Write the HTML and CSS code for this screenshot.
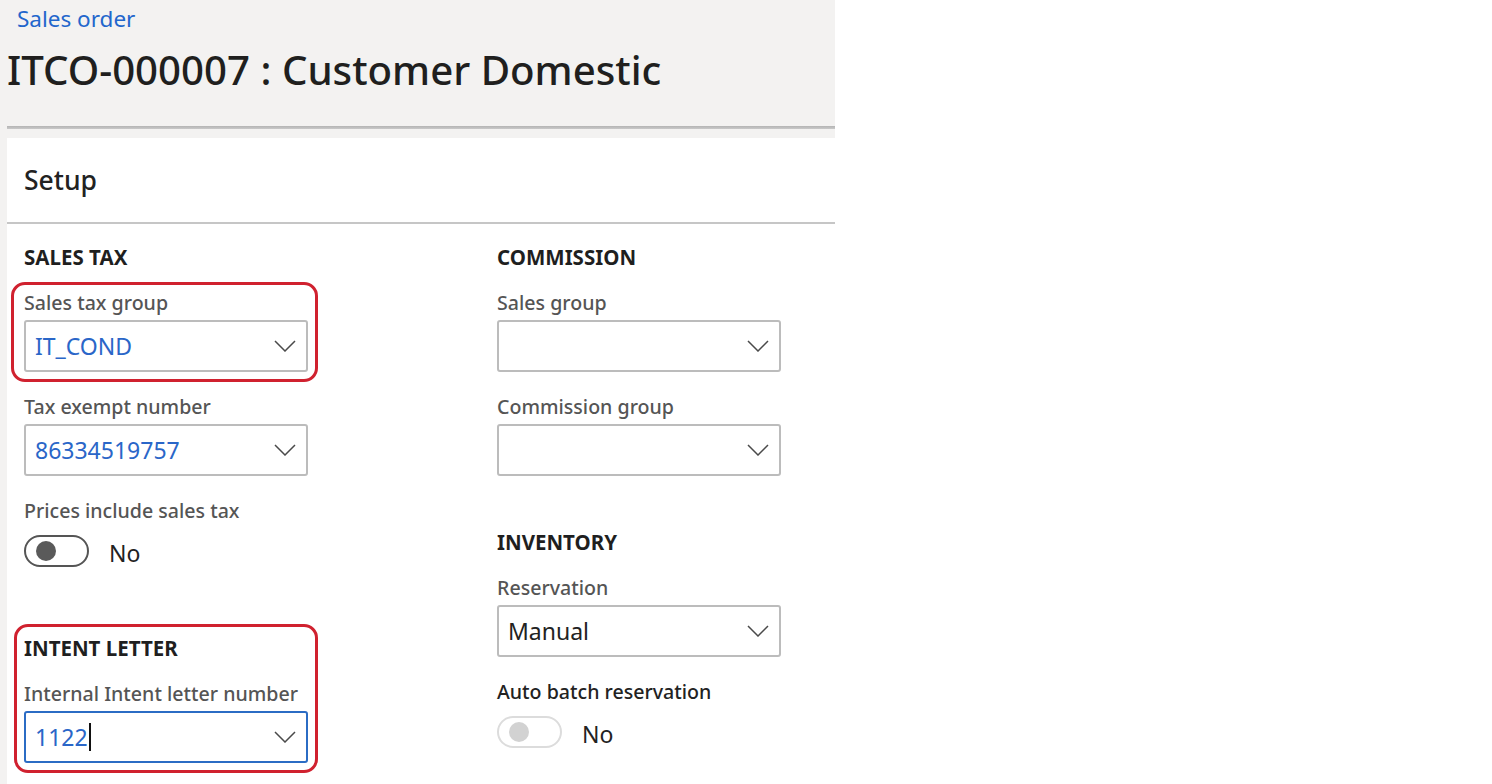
FILE: index.html
```html
<!DOCTYPE html>
<html lang="en">
<head>
<meta charset="utf-8">
<title>Sales order</title>
<link rel="stylesheet" href="styles.css">
</head>
<body>
<div class="page">
  <header class="header">
    <a class="crumb" href="#">Sales order</a>
    <h1 class="title">ITCO-000007 : Customer Domestic</h1>
  </header>
  <div class="header-rule"></div>
  <main class="panel">
    <div class="panel-head">
      <h2 class="panel-title">Setup</h2>
    </div>
    <div class="form">
      <div class="col">
        <h3 class="group-title">SALES TAX</h3>
        <div class="field highlight hl-1">
          <label class="label">Sales tax group</label>
          <div class="input"><span class="value link">IT_COND</span><svg class="chev" viewBox="0 0 22 12"><path d="M1 1 L11 11 L21 1"/></svg></div>
        </div>
        <div class="field">
          <label class="label">Tax exempt number</label>
          <div class="input"><span class="value link">86334519757</span><svg class="chev" viewBox="0 0 22 12"><path d="M1 1 L11 11 L21 1"/></svg></div>
        </div>
        <div class="field">
          <label class="label">Prices include sales tax</label>
          <div class="toggle-row"><span class="toggle"><span class="knob"></span></span><span class="toggle-text">No</span></div>
        </div>
        <div class="highlight hl-2">
          <h3 class="group-title">INTENT LETTER</h3>
          <div class="field">
            <label class="label">Internal Intent letter number</label>
            <div class="input focused"><span class="value link">1122</span><span class="caret"></span><svg class="chev" viewBox="0 0 22 12"><path d="M1 1 L11 11 L21 1"/></svg></div>
          </div>
        </div>
      </div>
      <div class="col">
        <h3 class="group-title">COMMISSION</h3>
        <div class="field">
          <label class="label">Sales group</label>
          <div class="input"><svg class="chev" viewBox="0 0 22 12"><path d="M1 1 L11 11 L21 1"/></svg></div>
        </div>
        <div class="field">
          <label class="label">Commission group</label>
          <div class="input"><svg class="chev" viewBox="0 0 22 12"><path d="M1 1 L11 11 L21 1"/></svg></div>
        </div>
        <h3 class="group-title inventory">INVENTORY</h3>
        <div class="field">
          <label class="label">Reservation</label>
          <div class="input"><span class="value">Manual</span><svg class="chev" viewBox="0 0 22 12"><path d="M1 1 L11 11 L21 1"/></svg></div>
        </div>
        <div class="field">
          <label class="label dark">Auto batch reservation</label>
          <div class="toggle-row"><span class="toggle disabled"><span class="knob"></span></span><span class="toggle-text">No</span></div>
        </div>
      </div>
    </div>
  </main>
</div>
</body>
</html>
```
FILE: styles.css
```css
* { box-sizing: border-box; }
html, body { margin: 0; padding: 0; background: #ffffff; }
body {
  font-family: "Noto Sans", "Open Sans", sans-serif;
  color: #222;
  height: 784px;
  overflow: hidden;
}
.page {
  width: 835px;
  height: 784px;
  background: #f3f2f1;
  display: flex;
  flex-direction: column;
}
.header {
  height: 126px;
  padding: 3px 0 0 0;
}
.crumb {
  display: block;
  margin-left: 17px;
  font-size: 22.5px;
  line-height: 32px;
  color: #2266cc;
  text-decoration: none;
}
.title {
  margin: 9px 0 0 7px;
  font-size: 40.2px;
  line-height: 52px;
  font-weight: 500;
  color: #201f1e;
}
.header-rule {
  margin-left: 7px;
  height: 3px;
  background: linear-gradient(#b4b4b4, #c9c9c9);
}
.panel {
  margin: 9px 0 0 7px;
  flex: 1;
  background: #ffffff;
  display: flex;
  flex-direction: column;
}
.panel-head {
  height: 86px;
  border-bottom: 2px solid #c6c6c6;
  display: flex;
  align-items: center;
  padding-left: 17px;
}
.panel-title {
  margin: 0;
  font-size: 26.5px;
  font-weight: 500;
  color: #222;
}
.form {
  display: grid;
  grid-template-columns: 473px 284px;
  padding: 20px 0 0 17px;
}
.col {
  display: flex;
  flex-direction: column;
  width: 284px;
}
.group-title {
  margin: 0;
  font-size: 20.5px;
  line-height: 26px;
  font-weight: 700;
  color: #1f1f1f;
}
.group-title.inventory { margin-top: 53px; }
.field {
  display: flex;
  flex-direction: column;
  margin-top: 20px;
}
.field + .field { margin-top: 22px; }
.label {
  font-size: 19.6px;
  line-height: 26px;
  font-weight: 500;
  color: #555;
  margin-bottom: 4px;
}
.label.dark { color: #222; }
.input {
  height: 52px;
  border: 2px solid #bcbcbc;
  border-radius: 3px;
  display: flex;
  align-items: center;
  padding: 0 10px 0 9px;
}
.input.focused { border-color: #2b6cc4; }
.value {
  font-size: 23px;
  color: #222;
}
.value.link { color: #2a66c8; }
.caret {
  width: 2px;
  height: 28px;
  background: #111;
  margin-left: 1px;
}
.chev {
  width: 22px;
  height: 12px;
  margin-left: auto;
  flex: 0 0 auto;
  fill: none;
  stroke: #4a4a4a;
  stroke-width: 1.5;
}
.toggle-row {
  display: flex;
  align-items: center;
  gap: 20px;
  margin-top: 5px;
}
.toggle {
  width: 65px;
  height: 32px;
  border: 2px solid #555;
  border-radius: 16px;
  display: flex;
  align-items: center;
  padding-left: 10px;
}
.knob {
  width: 20px;
  height: 20px;
  border-radius: 50%;
  background: #5a5a5a;
}
.toggle.disabled { border-color: #dcdcdc; }
.toggle.disabled .knob { background: #d2d2d2; }
.toggle-text {
  font-size: 23px;
  color: #222;
  padding-top: 4px;
}
.highlight { position: relative; }
.highlight::after {
  content: "";
  position: absolute;
  border: 3px solid #d0212f;
  border-radius: 14px;
  pointer-events: none;
}
.hl-1::after { top: -8px; left: -13px; right: -10px; bottom: -10px; }
.hl-2 { margin-top: 66px; }
.hl-2::after { top: -11px; left: -10px; right: -10px; bottom: -10px; }
```
